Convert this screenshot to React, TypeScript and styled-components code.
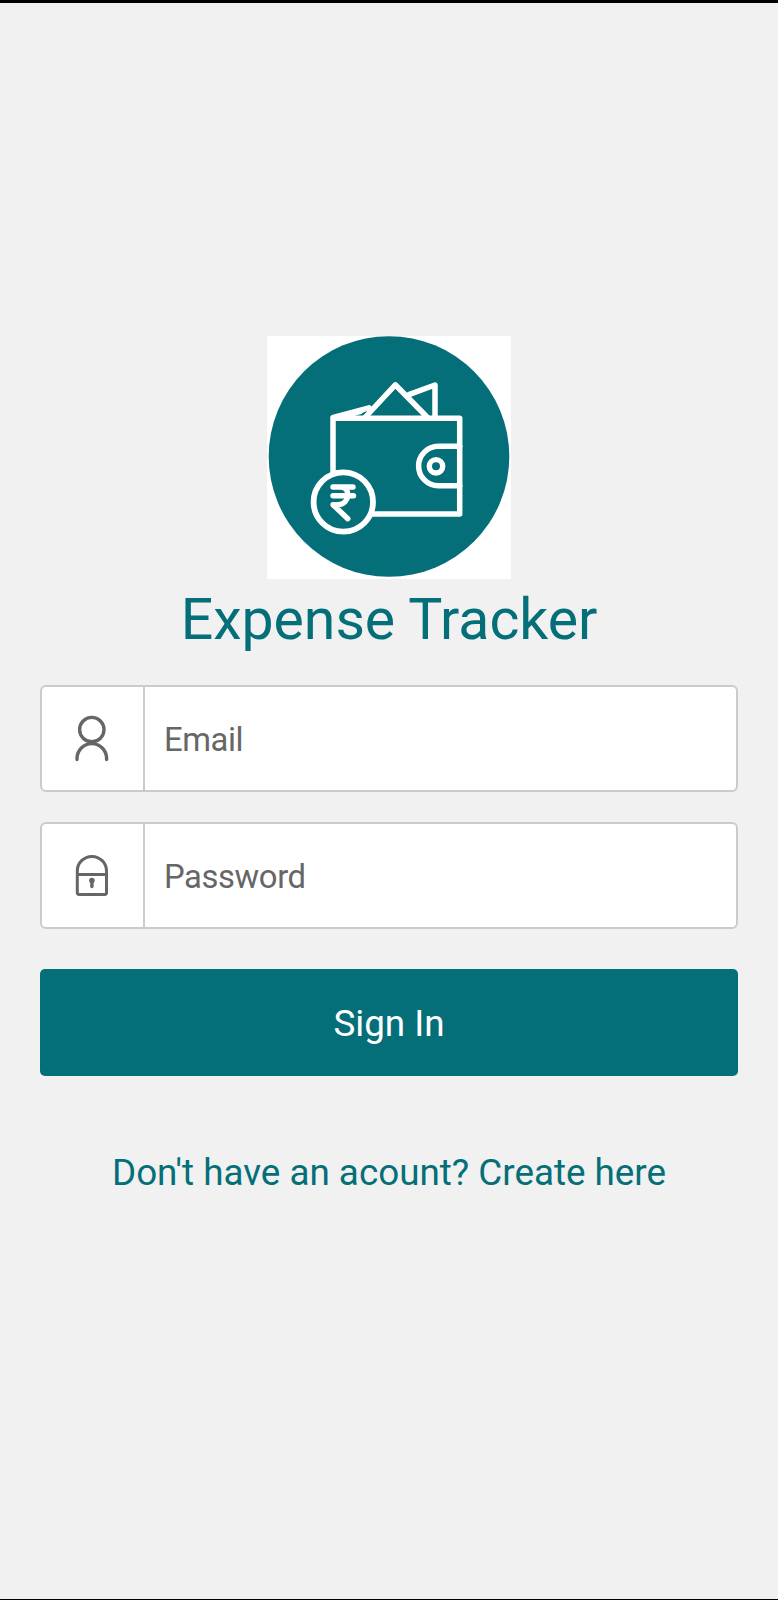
import React from 'react';
import styled, { createGlobalStyle } from 'styled-components';

const TEAL = '#046f78';

const GlobalStyle = createGlobalStyle`
  * { box-sizing: border-box; }
  body {
    margin: 0;
    background: #f1f1f1;
    font-family: Roboto, "Liberation Sans", sans-serif;
  }
`;

const Screen = styled.main`
  display: flex;
  flex-direction: column;
  align-items: center;
  height: 1600px;
  padding: 333px 40px 0;
  border-top: 3px solid #000;
  border-bottom: 1px solid #000;
  background: #f1f1f1;
`;

const Logo = styled.svg`
  display: block;
  flex: none;
  width: 244px;
  height: 243px;
  background: #fff;
`;

const Title = styled.h1`
  margin: 7px 0 0;
  height: 68px;
  font-size: 57.2px;
  line-height: 68px;
  font-weight: 400;
  letter-spacing: -0.05px;
  white-space: nowrap;
  color: ${TEAL};
`;

const Form = styled.form`
  display: flex;
  flex-direction: column;
  width: 698px;
  margin-top: 31px;
`;

const Field = styled.label`
  display: flex;
  height: 107px;
  margin-bottom: 30px;
  border: 2px solid #cbcbcb;
  border-radius: 6px;
  background: #fff;
`;

const IconCell = styled.span`
  display: flex;
  align-items: center;
  justify-content: center;
  width: 103px;
  padding-right: 1px;
  border-right: 2px solid #cbcbcb;
`;

const FieldIcon = styled.svg`
  width: 40px;
  height: 60px;
  fill: none;
  stroke: #666;
  stroke-width: 3.4;
  stroke-linecap: round;
  stroke-linejoin: round;
`;

const FieldText = styled.span`
  padding-left: 19px;
  font-size: 32.8px;
  line-height: 106px;
  letter-spacing: -0.4px;
  color: #666;
`;

const SubmitButton = styled.button`
  height: 107px;
  margin-top: 10px;
  padding: 1px 0 0;
  border: 0;
  border-radius: 5px;
  background: ${TEAL};
  color: #fff;
  font-family: inherit;
  font-size: 36.8px;
`;

const CreateLink = styled.a`
  margin-top: 75px;
  font-size: 36.8px;
  line-height: 44px;
  white-space: nowrap;
  color: ${TEAL};
`;

function WalletLogo() {
  return (
    <Logo viewBox="267 336 244 243" fill="none" stroke="#fff" strokeWidth="5.5" strokeLinejoin="round" strokeLinecap="round">
      <circle cx="389" cy="456.5" r="120.3" fill={TEAL} stroke="none" />
      <path d="M333 418.3H459.7V514H333Z" />
      <path d="M365 417.5L395.3 384.8L427.5 417.5" />
      <path d="M409.5 394.3L435 385V417" />
      <path d="M333.3 417.3L369 407.8" />
      <path d="M334 417L369 407.5L361 413L354 415Z" fill="#fff" strokeWidth="2" />
      <path d="M459.7 446.3H438.3a19.7 19.7 0 0 0 0 39.4H459.7" />
      <circle cx="436" cy="466.3" r="6.7" strokeWidth="5.4" />
      <circle cx="343.3" cy="502" r="29.7" fill={TEAL} strokeWidth="5.8" />
      <path d="M333 487H353M333 495.7H353.5M341 487C351 487 350 504.7 338 504.7H333L347.8 518.7" strokeWidth="5.4" />
    </Logo>
  );
}

export default function App() {
  return (
    <>
      <GlobalStyle />
      <Screen>
        <WalletLogo />
        <Title>Expense Tracker</Title>
        <Form>
          <Field>
            <IconCell>
              <FieldIcon viewBox="72 709 40 60">
                <circle cx="91.8" cy="729.6" r="12.2" />
                <path d="M77 759.6V758.4a14.8 14.8 0 0 1 29.6 0V759.6" />
              </FieldIcon>
            </IconCell>
            <FieldText>Email</FieldText>
          </Field>
          <Field>
            <IconCell>
              <FieldIcon viewBox="72 846 40 60">
                <path d="M77.3 871a14.6 14.6 0 0 1 29.2 0V893a1.5 1.5 0 0 1-1.5 1.5H78.8a1.5 1.5 0 0 1-1.5-1.5ZM77.3 874.4H106.5" strokeWidth="3" />
                <circle cx="91.9" cy="880.6" r="2.8" fill="#666" stroke="none" />
                <path d="M91.9 881V886.5" />
              </FieldIcon>
            </IconCell>
            <FieldText>Password</FieldText>
          </Field>
          <SubmitButton type="button">Sign In</SubmitButton>
        </Form>
        <CreateLink>Don't have an acount? Create here</CreateLink>
      </Screen>
    </>
  );
}
